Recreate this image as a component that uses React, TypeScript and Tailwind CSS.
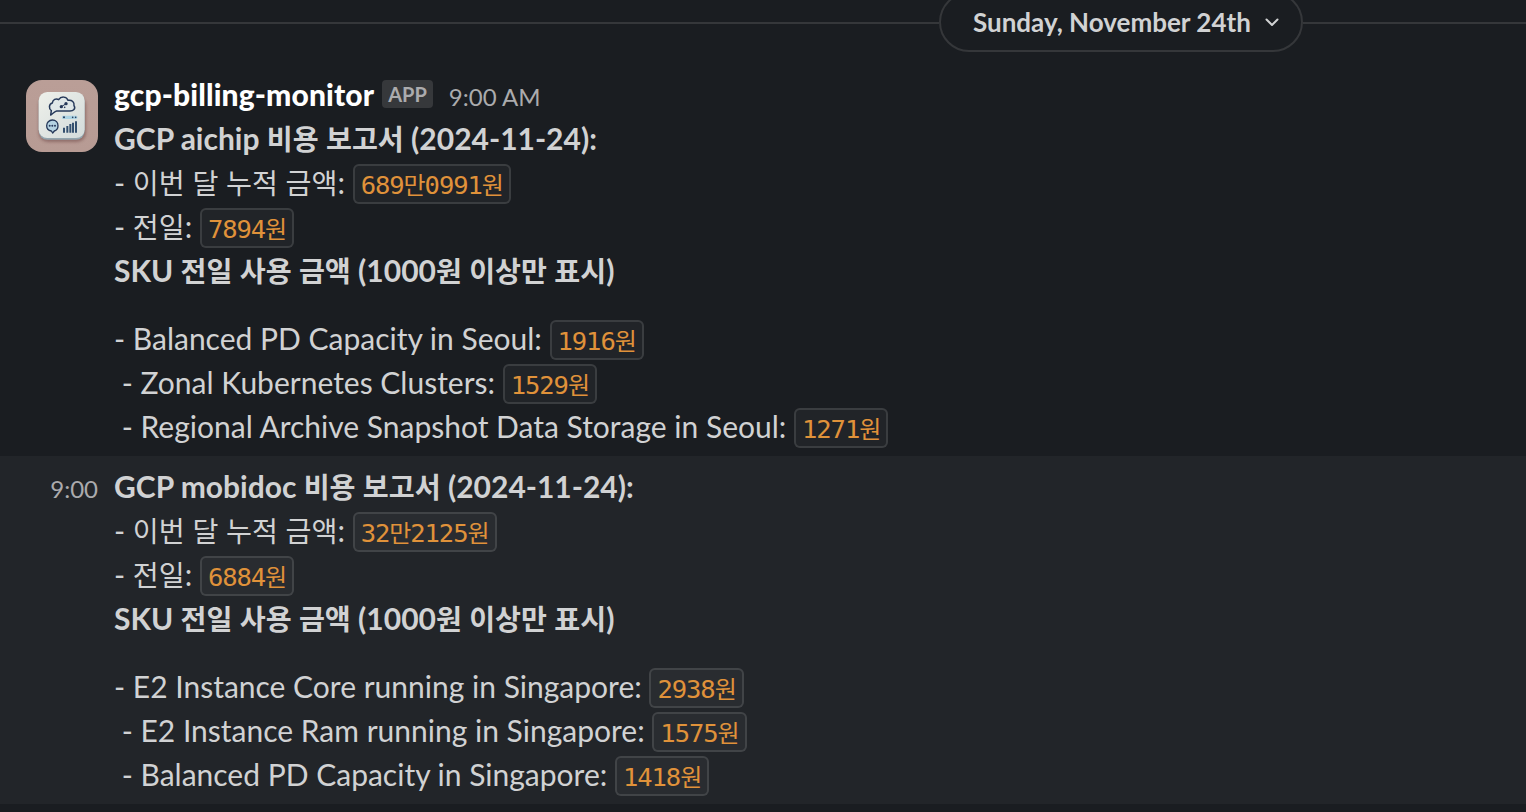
import { Fragment } from 'react';

interface Entry {
  text: string;
  amount: string;
}

interface Report {
  title: string;
  totals: Entry[];
  skuTitle: string;
  skus: Entry[];
}

const reports: Report[] = [
  {
    title: 'GCP aichip 비용 보고서 (2024-11-24):',
    totals: [
      { text: '- 이번 달 누적 금액: ', amount: '689만0991원' },
      { text: '- 전일: ', amount: '7894원' },
    ],
    skuTitle: 'SKU 전일 사용 금액 (1000원 이상만 표시)',
    skus: [
      { text: '- Balanced PD Capacity in Seoul: ', amount: '1916원' },
      { text: ' - Zonal Kubernetes Clusters: ', amount: '1529원' },
      { text: ' - Regional Archive Snapshot Data Storage in Seoul: ', amount: '1271원' },
    ],
  },
  {
    title: 'GCP mobidoc 비용 보고서 (2024-11-24):',
    totals: [
      { text: '- 이번 달 누적 금액: ', amount: '32만2125원' },
      { text: '- 전일: ', amount: '6884원' },
    ],
    skuTitle: 'SKU 전일 사용 금액 (1000원 이상만 표시)',
    skus: [
      { text: '- E2 Instance Core running in Singapore: ', amount: '2938원' },
      { text: ' - E2 Instance Ram running in Singapore: ', amount: '1575원' },
      { text: ' - Balanced PD Capacity in Singapore: ', amount: '1418원' },
    ],
  },
];

// Hangul is set slightly smaller than the latin text around it
function Mixed({ children }: { children: string }) {
  return (
    <>
      {children.split(/([가-힣]+)/).map((part, i) =>
        i % 2 === 1 ? (
          <span key={i} className="font-['Noto_Sans_CJK_KR',sans-serif] text-[0.94em] leading-none">
            {part}
          </span>
        ) : (
          <Fragment key={i}>{part}</Fragment>
        )
      )}
    </>
  );
}

function Title({ children }: { children: string }) {
  return (
    <div className="h-11 font-bold whitespace-pre">
      <Mixed>{children}</Mixed>
    </div>
  );
}

function Row({ text, amount }: Entry) {
  return (
    <div className="flex h-11 items-start whitespace-pre">
      <span>
        <Mixed>{text}</Mixed>
      </span>
      <code className="mt-1 h-10 rounded-md border-2 border-[#e8e8e8]/13 bg-[#e8e8e8]/4 px-1.5 font-['DejaVu_Sans_Mono',monospace] text-[25.5px] leading-[38px] tracking-[-1.05px] text-[#e0923a]">
        <Mixed>{amount}</Mixed>
      </code>
    </div>
  );
}

function ReportBody({ report }: { report: Report }) {
  return (
    <>
      <Title>{report.title}</Title>
      {report.totals.map((row) => (
        <Row key={row.text} {...row} />
      ))}
      <Title>{report.skuTitle}</Title>
      <div className="mt-6">
        {report.skus.map((row) => (
          <Row key={row.text} {...row} />
        ))}
      </div>
    </>
  );
}

function Avatar() {
  return (
    <svg viewBox="18 18 216 216" className="h-[72px] w-[72px] rounded-2xl">
      <defs>
        <linearGradient id="wall" x1="0" y1="0" x2="0" y2="1">
          <stop offset="0" stopColor="#ba9e97" />
          <stop offset="1" stopColor="#b79b94" />
        </linearGradient>
        <linearGradient id="tile" x1="0" y1="0" x2="1" y2="1">
          <stop offset="0" stopColor="#eef0ea" />
          <stop offset="1" stopColor="#d3dbdb" />
        </linearGradient>
        <filter id="soft" x="-20%" y="-20%" width="140%" height="140%">
          <feGaussianBlur stdDeviation="5" />
        </filter>
      </defs>
      <rect x="18" y="18" width="216" height="216" fill="url(#wall)" />
      <rect x="56" y="66" width="142" height="138" rx="28" fill="#7c5553" opacity="0.65" filter="url(#soft)" />
      <rect x="56" y="56" width="138" height="141" rx="26" fill="#93a5ae" />
      <rect x="56" y="54" width="138" height="138" rx="26" fill="url(#tile)" />
      <path
        d="M92 123 L94 110 C86 104 86 90 97 87 C98 77 108 72 116 77 C123 66 140 67 144 79 C156 77 164 85 162 95 C168 104 160 111 150 111 L110 111 C104 112 100 118 92 123 Z"
        fill="#dfe7e8"
        stroke="#26395a"
        strokeWidth="4.5"
        strokeLinejoin="round"
      />
      <path d="M124 98 L137 90" stroke="#26395a" strokeWidth="3" />
      <circle cx="124" cy="98" r="5" fill="#26395a" />
      <circle cx="138" cy="89" r="5" fill="#26395a" />
      <circle cx="134" cy="100" r="2.5" fill="#26395a" />
      <rect x="126" y="125" width="46" height="10" rx="3" fill="#acd3e4" />
      <circle cx="132" cy="130" r="3" fill="#26395a" />
      <circle cx="158" cy="130" r="2.5" fill="#26395a" />
      <circle cx="167" cy="130" r="2.5" fill="#26395a" />
      <path
        d="M97 138 C108 138 114 146 114 155 C114 163 109 169 103 171 L98 177 L94 171 C85 169 80 163 80 155 C80 146 87 138 97 138 Z"
        fill="#b5d3e2"
        stroke="#26395a"
        strokeWidth="4"
        strokeLinejoin="round"
      />
      <circle cx="89" cy="155" r="3" fill="#26395a" />
      <circle cx="97" cy="155" r="3" fill="#26395a" />
      <circle cx="105" cy="155" r="3" fill="#26395a" />
      <path d="M132 161V176M142 156V176M151 150V176M159 146V176M168 142V176" stroke="#34506f" strokeWidth="6" />
    </svg>
  );
}

function DateDivider() {
  return (
    <div className="flex h-16 items-start">
      <div className="mt-[22px] h-0.5 w-[939px] bg-[#35373a]" />
      <button className="-mt-2 flex h-[60px] w-[364px] items-center rounded-full border-2 border-[#35373a] pl-8 text-[26px] font-bold">
        Sunday, November 24th
        <svg viewBox="0 0 14 9" className="ml-[14px] h-[9px] w-[14px]" fill="none">
          <path d="M1.5 1.5 L7 7 L12.5 1.5" stroke="currentColor" strokeWidth="2" strokeLinecap="round" strokeLinejoin="round" />
        </svg>
      </button>
      <div className="mt-[22px] h-0.5 flex-1 bg-[#35373a]" />
    </div>
  );
}

export default function App() {
  const [first, second] = reports;

  return (
    <div className="h-[812px] overflow-hidden bg-[#1a1d21] font-['Lato','Noto_Sans_CJK_KR',sans-serif] text-[30px] leading-[44px] text-[#d1d2d3]">
      <DateDivider />

      <div className="flex h-[392px] gap-4 pt-2 pl-[26px]">
        <div className="pt-2">
          <Avatar />
        </div>
        <div>
          <div className="flex h-11 items-start">
            <span className="font-black tracking-[0.12px] text-white">gcp-billing-monitor</span>
            <span className="mt-2 ml-2 h-7 rounded-sm bg-[#36383b] px-1.5 text-[20px] leading-[29px] font-bold text-[#ababad]">
              APP
            </span>
            <span className="mt-[3px] ml-4 text-[24px] text-[#ababad]">9:00 AM</span>
          </div>
          <ReportBody report={first} />
        </div>
      </div>

      <div className="flex h-[348px] gap-4 bg-[#222529] pt-2">
        <div className="w-[98px] pt-[3px] text-right text-[24px] text-[#ababad]">9:00</div>
        <div>
          <ReportBody report={second} />
        </div>
      </div>
    </div>
  );
}
